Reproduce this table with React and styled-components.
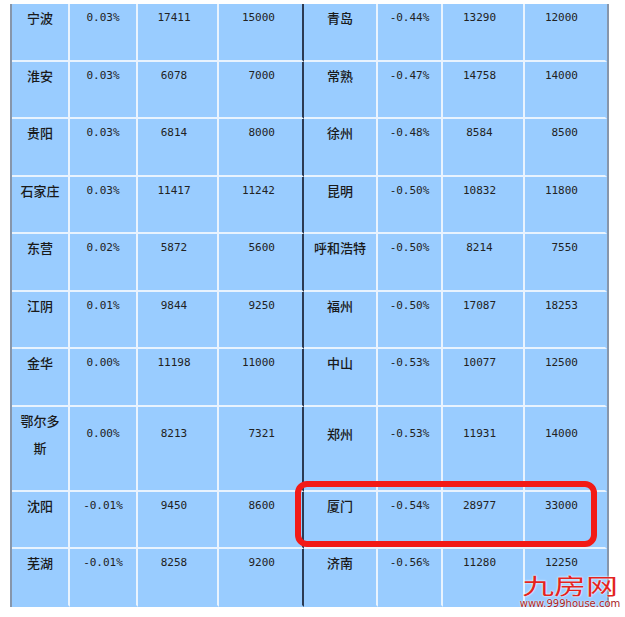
import React from 'react';
import styled, { createGlobalStyle } from 'styled-components';

const GlobalStyle = createGlobalStyle`
  html, body {
    margin: 0;
    padding: 0;
    background: #ffffff;
  }
`;

const rows = [
    [['宁波', '0.03%', '17411', '15000'], ['青岛', '-0.44%', '13290', '12000']],
    [['淮安', '0.03%', '6078', '7000'], ['常熟', '-0.47%', '14758', '14000']],
    [['贵阳', '0.03%', '6814', '8000'], ['徐州', '-0.48%', '8584', '8500']],
    [['石家庄', '0.03%', '11417', '11242'], ['昆明', '-0.50%', '10832', '11800']],
    [['东营', '0.02%', '5872', '5600'], ['呼和浩特', '-0.50%', '8214', '7550']],
    [['江阴', '0.01%', '9844', '9250'], ['福州', '-0.50%', '17087', '18253']],
    [['金华', '0.00%', '11198', '11000'], ['中山', '-0.53%', '10077', '12500']],
    [['鄂尔多|斯', '0.00%', '8213', '7321'], ['郑州', '-0.53%', '11931', '14000']],
    [['沈阳', '-0.01%', '9450', '8600'], ['厦门', '-0.54%', '28977', '33000']],
    [['芜湖', '-0.01%', '8258', '9200'], ['济南', '-0.56%', '11280', '12250']],
];

const Page = styled.div`
    position: relative;
    width: 625px;
    height: 617px;
    overflow: hidden;
    background: #ffffff;
`;

const Table = styled.div`
    display: flex;
    flex-direction: column;
    width: 595px;
    margin: 4px 0 0 10px;
    border-left: 2px solid #8796ab;
    border-right: 2px solid #8796ab;
    background: #99ccff;
`;

const Row = styled.div`
    display: grid;
    grid-template-columns: 58px 68px 81px 85px 74px 65px 82px 82px;
`;

const Cell = styled.div`
    display: flex;
    flex-direction: column;
    justify-content: center;
    align-items: ${props => props.$align === 'right' ? 'flex-end' : 'center'};
    padding-right: ${props => props.$align === 'right' ? '27px' : props.$shift ? '7px' : '0'};
    border-bottom: 2px solid ${props => props.$lastRow ? '#99ccff' : '#e8f3fe'};
    border-right: 2px solid ${props => props.$divider ? '#2c3a52' : props.$lastCol ? '#99ccff' : '#e8f3fe'};
`;

const CityText = styled.span`
    display: block;
    text-align: center;
    font-family: "Noto Sans CJK SC", sans-serif;
    font-size: 13px;
    font-weight: 500;
    line-height: 27.75px;
    padding-bottom: 27.75px;
    color: #1a1a1a;
`;

const NumText = styled.span`
    display: block;
    font-family: "DejaVu Sans Mono", "Noto Sans CJK SC", monospace;
    font-size: 11px;
    line-height: 27.75px;
    padding-bottom: 27.75px;
    color: #222222;
    white-space: pre;
`;

const Highlight = styled.div`
    position: absolute;
    left: 295px;
    top: 481px;
    width: 302px;
    height: 66px;
    box-sizing: border-box;
    border: 6px solid #f21a17;
    border-radius: 12px;
`;

const Watermark = styled.div`
    position: absolute;
    left: 518px;
    top: 572px;
    width: 104px;
    display: flex;
    flex-direction: column;
    align-items: center;
`;

const LogoText = styled.span`
    display: block;
    font-family: "Noto Sans CJK SC", sans-serif;
    font-size: 22px;
    line-height: 24px;
    color: #e3241f;
    transform: scaleX(1.45);
    text-shadow: 0 0 2px #ffffff, 0 0 1px #ffffff;
`;

const SiteText = styled.span`
    display: block;
    margin-top: 2px;
    font-family: "DejaVu Sans", sans-serif;
    font-size: 10px;
    line-height: 11px;
    color: #a5201d;
    text-shadow: 0 0 2px #ffffff, 0 0 1px #ffffff;
`;

function City({ name }) {
    const parts = name.split('|');
    return (
        <CityText>
            {parts.map((p, i) => (
                <React.Fragment key={i}>
                    {i > 0 && <br />}
                    {p}
                </React.Fragment>
            ))}
        </CityText>
    );
}

export default function App() {
    return (
        <Page>
            <GlobalStyle />
            <Table>
                {rows.map((row, r) => {
                    const lastRow = r === rows.length - 1;
                    return (
                        <Row key={r}>
                            {row.map((half, h) => (
                                <React.Fragment key={h}>
                                    <Cell $lastRow={lastRow}><City name={half[0]} /></Cell>
                                    <Cell $lastRow={lastRow}><NumText>{half[1]}</NumText></Cell>
                                    <Cell $lastRow={lastRow} $shift><NumText>{half[2]}</NumText></Cell>
                                    <Cell $lastRow={lastRow} $align="right" $divider={h === 0} $lastCol={h === 1}>
                                        <NumText>{half[3]}</NumText>
                                    </Cell>
                                </React.Fragment>
                            ))}
                        </Row>
                    );
                })}
            </Table>
            <Highlight />
            <Watermark>
                <LogoText>九房网</LogoText>
                <SiteText>www.999house.com</SiteText>
            </Watermark>
        </Page>
    );
}
